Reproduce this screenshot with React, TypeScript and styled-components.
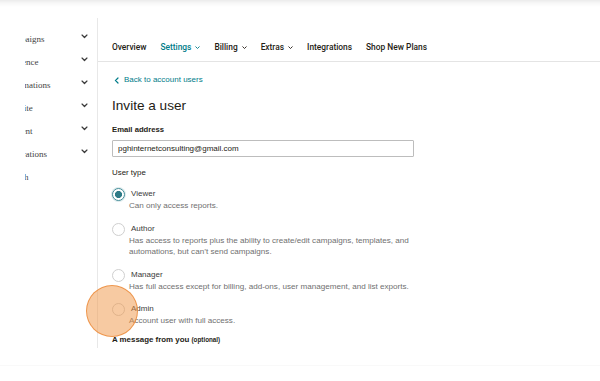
import { FC } from "react"
import styled, { createGlobalStyle } from "styled-components"

const sideItems = ["Campaigns", "Audience", "Automations", "Website", "Content", "Integrations", "Search"]
const navItems = [
  { label: "Overview" },
  { label: "Settings", menu: true, active: true },
  { label: "Billing", menu: true },
  { label: "Extras", menu: true },
  { label: "Integrations" },
  { label: "Shop New Plans" },
]
const userTypes = [
  { name: "Viewer", desc: "Can only access reports.", checked: true },
  {
    name: "Author",
    desc: "Has access to reports plus the ability to create/edit campaigns, templates, and automations, but can’t send campaigns.",
  },
  { name: "Manager", desc: "Has full access except for billing, add-ons, user management, and list exports." },
  { name: "Admin", desc: "Account user with full access." },
]

const Chevron: FC<{ size?: number; color?: string }> = ({ size = 6, color = "#333" }) => (
  <svg width={size} height={size * 0.7} viewBox="0 0 10 7" fill="none">
    <path d="M1.5 1.5 L5 5 L8.5 1.5" stroke={color} strokeWidth="1.8" strokeLinecap="round" strokeLinejoin="round" />
  </svg>
)

const App: FC = () => {
  return (
    <Page>
      <GlobalStyle />
      <TopShade />
      <Main>
        <Sidebar>
          {sideItems.map((item) => (
            <SideItem key={item}>
              <ClipWindow>
                <SideLabel>{item}</SideLabel>
              </ClipWindow>
              {item !== "Search" && <Chevron size={7} color="#3a3a3a" />}
            </SideItem>
          ))}
        </Sidebar>
        <Content>
          <Nav>
            {navItems.map((n) => (
              <NavItem key={n.label} $active={n.active}>
                {n.label}
                {n.menu && <Chevron size={5} color={n.active ? "#007c89" : "#241c15"} />}
              </NavItem>
            ))}
          </Nav>
          <Form>
            <BackLink>
              <svg width="5" height="7" viewBox="0 0 5 7" fill="none">
                <path d="M4 1 L1.5 3.5 L4 6" stroke="#007c89" strokeWidth="1.2" strokeLinecap="round" />
              </svg>
              Back to account users
            </BackLink>
            <Title>Invite a user</Title>
            <FieldLabel>Email address</FieldLabel>
            <Input defaultValue="pghinternetconsulting@gmail.com" />
            <GroupLabel>User type</GroupLabel>
            <Options>
              {userTypes.map((u) => (
                <Option key={u.name}>
                  <OptionHead>
                    <Radio $checked={u.checked} />
                    <OptionName>{u.name}</OptionName>
                  </OptionHead>
                  <OptionDesc>{u.desc}</OptionDesc>
                </Option>
              ))}
            </Options>
            <MessageLabel>
              A message from you <small>(optional)</small>
            </MessageLabel>
          </Form>
          <ClickMark />
        </Content>
      </Main>
      <Footer />
    </Page>
  )
}

export default App

//Styled Components

const GlobalStyle = createGlobalStyle`
  html, body {
    margin: 0;
    padding: 0;
    background: #ffffff;
    overflow: hidden;
  }
  * {
    box-sizing: border-box;
  }
`
const Page = styled.div`
  width: 600px;
  height: 381px;
  display: flex;
  flex-direction: column;
  font-family: "Liberation Sans", Arial, sans-serif;
  color: #241c15;
`
const TopShade = styled.div`
  height: 18px;
  flex-shrink: 0;
  background: linear-gradient(to bottom, #ebebeb 0px, #f7f7f7 3px, #ffffff 7px);
`
const Main = styled.div`
  display: flex;
  height: 330px;
  flex-shrink: 0;
`
const Sidebar = styled.div`
  width: 97px;
  flex-shrink: 0;
  padding-top: 7px;
  display: flex;
  flex-direction: column;
`
const SideItem = styled.div`
  height: 23px;
  display: flex;
  align-items: center;
  padding-left: 25px;
  padding-right: 9px;
  gap: 4px;
`
const ClipWindow = styled.div`
  flex: 1;
  overflow: hidden;
  white-space: nowrap;
`
const SideLabel = styled.span`
  display: inline-block;
  margin-left: -21px;
  font-family: "Liberation Serif", "DejaVu Serif", serif;
  font-size: 9px;
  color: #444444;
`
const Content = styled.div`
  flex: 1;
  border-left: 1px solid #e8e8e8;
  position: relative;
  min-width: 0;
`
const Nav = styled.div`
  display: flex;
  gap: 14px;
  padding: 23px 0 8px 14px;
  border-bottom: 1px solid #e4e4e4;
`
const NavItem = styled.div<{ $active?: boolean }>`
  display: flex;
  align-items: center;
  gap: 4px;
  line-height: 12px;
  font-family: Roboto, "Liberation Sans", sans-serif;
  font-size: 8.4px;
  font-weight: 500;
  color: ${(p) => (p.$active ? "#007c89" : "#241c15")};
  svg {
    margin-top: 1px;
  }
`
const Form = styled.div`
  padding: 12px 0 0 14px;
  display: flex;
  flex-direction: column;
  align-items: flex-start;
`
const BackLink = styled.a`
  display: flex;
  align-items: center;
  gap: 5px;
  padding-left: 2px;
  line-height: 12px;
  font-size: 8px;
  color: #007c89;
  cursor: pointer;
`
const Title = styled.h1`
  margin: 11px 0 0;
  line-height: 18px;
  font-size: 13.6px;
  font-weight: 400;
  color: #241c15;
`
const FieldLabel = styled.label`
  margin-top: 9px;
  line-height: 12px;
  font-size: 7.7px;
  font-weight: 700;
`
const Input = styled.input`
  margin-top: 4px;
  width: 302px;
  height: 17px;
  padding: 0 5px;
  border: 1px solid #bdbdbd;
  border-radius: 1px;
  font-family: "Liberation Sans", Arial, sans-serif;
  font-size: 8px;
  color: #241c15;
  outline: none;
`
const GroupLabel = styled.div`
  margin-top: 10px;
  line-height: 12px;
  font-size: 7.9px;
`
const Options = styled.div`
  margin-top: 8px;
  display: flex;
  flex-direction: column;
  gap: 10px;
`
const Option = styled.div`
  display: flex;
  flex-direction: column;
`
const OptionHead = styled.div`
  display: flex;
  align-items: center;
  height: 13px;
  gap: 6px;
`
const Radio = styled.span<{ $checked?: boolean }>`
  width: 13px;
  height: 13px;
  margin-top: 2px;
  border-radius: 50%;
  flex-shrink: 0;
  border: 1px solid ${(p) => (p.$checked ? "#3f8a96" : "#cfcfcf")};
  background: ${(p) => (p.$checked ? "radial-gradient(circle, #2e7b87 0 3.3px, #ffffff 3.8px)" : "#ffffff")};
  box-shadow: ${(p) => (p.$checked ? "0 0 0 1px rgba(63, 138, 150, 0.18)" : "none")};
`
const OptionName = styled.span`
  font-size: 8px;
  color: #3a3a3a;
`
const OptionDesc = styled.div`
  padding-left: 17px;
  max-width: 320px;
  line-height: 11.5px;
  font-size: 8.1px;
  color: #707070;
`
const MessageLabel = styled.div`
  margin-top: 7px;
  line-height: 12px;
  font-size: 7.9px;
  font-weight: 700;
  small {
    font-size: 6.3px;
  }
`
const ClickMark = styled.div`
  position: absolute;
  left: -12px;
  top: 267px;
  width: 52px;
  height: 52px;
  border-radius: 50%;
  background: rgba(240, 150, 70, 0.5);
  border: 1.5px solid rgba(236, 140, 60, 0.85);
  pointer-events: none;
`
const Footer = styled.div`
  flex: 1;
  margin-top: 17px;
  border-top: 1px solid #f9f9f9;
  background: #ffffff;
`
